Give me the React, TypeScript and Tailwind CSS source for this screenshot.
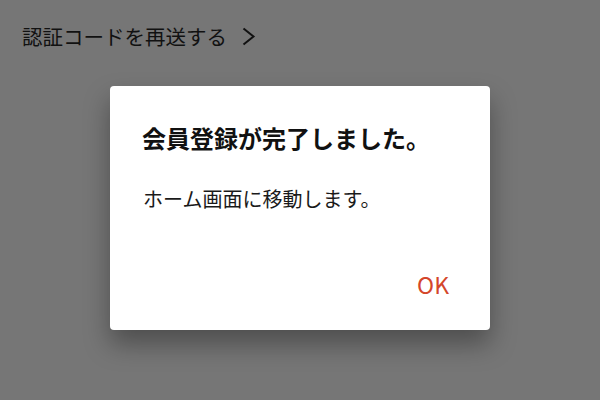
import React from 'react';

const jp = { fontFamily: '"Noto Sans CJK JP", "Noto Sans", sans-serif' };

export default function App() {
  return (
    <div className="relative w-[600px] h-[400px] overflow-hidden bg-[#767676]" style={jp}>
      {/* page behind the overlay */}
      <div className="flex items-center gap-[15px] pl-[22px] pt-[22px]">
        <span className="text-[20.5px] leading-[28px] text-[#111111]">認証コードを再送する</span>
        <svg width="14" height="19" viewBox="0 0 14 19" fill="none">
          <polyline points="1.5,1.5 11.5,9.5 1.5,17.5" stroke="#111111" strokeWidth="2" />
        </svg>
      </div>

      {/* dialog */}
      <div className="absolute left-[110px] top-[86px] w-[380px] h-[244px] rounded-[4px] bg-white shadow-[0_14px_26px_rgba(0,0,0,0.34)] flex flex-col">
        <h2 className="pl-[32px] pt-[38px] text-[24px] leading-[28px] font-bold text-[#111111]">
          会員登録が完了しました。
        </h2>
        <p className="pl-[33px] pt-[33px] text-[20px] leading-[28px] text-[#1a1a1a]">
          ホーム画面に移動します。
        </p>
        <div className="flex justify-end mt-auto pr-[41px] pb-[32px]">
          <button className="text-[23px] leading-[28px] font-normal text-[#d4462a]">OK</button>
        </div>
      </div>
    </div>
  );
}
